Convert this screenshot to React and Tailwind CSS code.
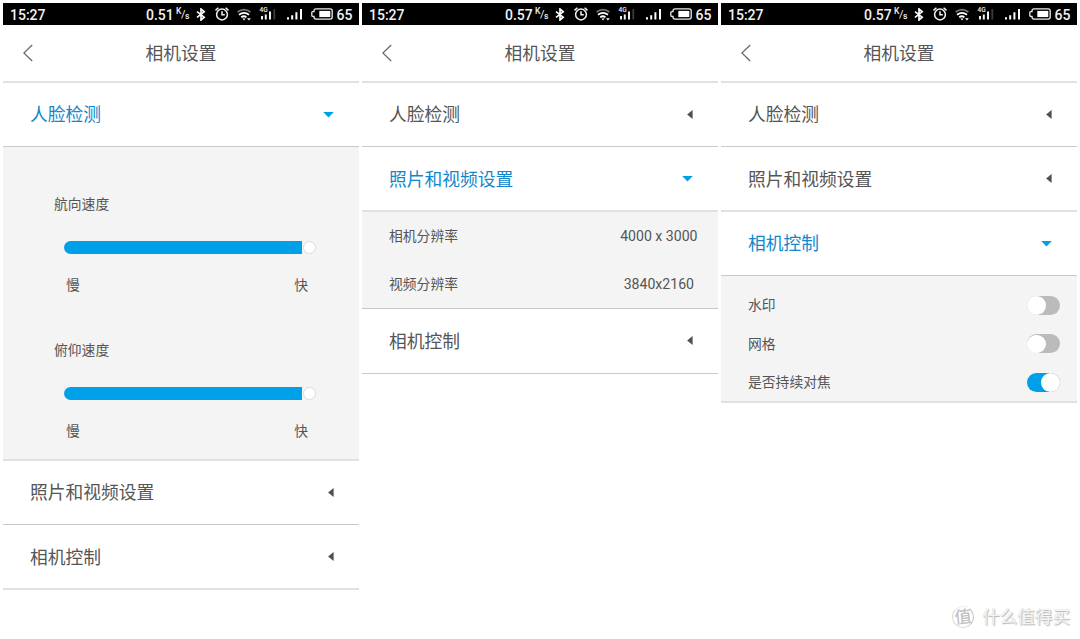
import React from "react";

const BORDER = {
  thin: "border-b border-[#c9c9c9]",
  soft: "border-b-2 border-[#e1e1e1]",
};

function BluetoothIcon() {
  return (
    <svg className="h-[13px] w-[10px] shrink-0" viewBox="0 0 10 13" fill="none" stroke="#fff" strokeWidth="1.7">
      <path d="M1 3.6 8.2 9.2 5 12V1L8.2 3.8 1 9.4" />
    </svg>
  );
}

function AlarmIcon() {
  return (
    <svg className="ml-[9px] h-[14px] w-[14px] shrink-0" viewBox="0 0 14 14" fill="none" stroke="#f4f4f4" strokeWidth="1.5">
      <circle cx="7" cy="7.5" r="5.4" />
      <path d="M7 4.2v3.6h2.8M.5 3.4 3.4.8M13.5 3.4 10.6.8" />
    </svg>
  );
}

function WifiIcon() {
  return (
    <svg className="ml-[8px] h-[13px] w-[15px] shrink-0" viewBox="0 0 15 13" fill="none" strokeWidth="1.7">
      <path d="M.6 4Q7-.9 13.4 4" stroke="#777" />
      <path d="M2 6.8Q7 3 12 6.8M4.2 9.3Q7 7.2 9.4 9.3" stroke="#fff" />
      <path d="M5.4 10.6h3.2L7 12.6z" fill="#fff" />
      <path d="M10 10.2h3.8l-1.9 2.4z" fill="#fff" />
    </svg>
  );
}

function MobileSignalIcon() {
  return (
    <div className="relative ml-[8px] h-[12px] w-[16px] shrink-0">
      <svg className="h-[12px] w-[16px]" viewBox="0 0 16 12" fill="#f2f2f2">
        <path d="M1 8h2v3.5H1zM4.8 6.5h2v5h-2zM9 3.5h2v8H9z" />
        <path d="M13.4 1h1.8v10.5h-1.8z" fill="#3a3a3a" />
      </svg>
      <span className="absolute -top-px left-0 text-[6.5px] leading-[6px] font-medium">4G</span>
    </div>
  );
}

function SignalIcon() {
  return (
    <svg className="ml-[10px] h-[12px] w-[17px] shrink-0" viewBox="0 0 17 12" fill="#fff">
      <path d="M1 9.3h2v2.2H1zM5.2 7.3h2v4.2h-2zM9.4 4.3h2v7.2h-2zM14 1h2v10.5h-2z" />
    </svg>
  );
}

function BatteryIcon() {
  return (
    <svg className="ml-[8px] h-[12px] w-[22px] shrink-0" viewBox="0 0 22 12" fill="none">
      <path d="M5 .9h14.2q2 0 2 2v6.2q0 2-2 2H5Q3 11.1 3 9.1V8.4H1.8Q.8 8.4.8 7.4V4.6q0-1 1-1H3V2.9Q3 .9 5 .9z" stroke="#eee" strokeWidth="1.3" />
      <path d="M8.3 2.9h11v6.2h-11z" fill="#fff" />
    </svg>
  );
}

function StatusBar({ speed }) {
  return (
    <div className="flex h-[22px] items-center bg-black pl-[7px] text-[14px] leading-[22px] font-medium text-[#f2f2f2]">
      <span className="w-[136px] pt-px">15:27</span>
      <span className="w-[30px] pt-px">{speed}</span>
      <span className="flex w-[19.5px] items-center text-[8.5px] leading-none">
        <span className="-mt-[5px]">K</span>
        <span className="-ml-[0.5px] text-[11px] font-normal">/</span>
        <span className="-ml-[0.5px] mt-[4px]">s</span>
      </span>
      <BluetoothIcon />
      <AlarmIcon />
      <WifiIcon />
      <MobileSignalIcon />
      <SignalIcon />
      <BatteryIcon />
      <span className="ml-[4px] pt-px">65</span>
    </div>
  );
}

function Phone({ speed, children }) {
  return (
    <section className="w-[356px] shrink-0">
      <StatusBar speed={speed} />
      <header className="flex h-[58px] items-center border-b-2 border-[#e1e1e1] pl-[20px]">
        <svg className="h-[18px] w-[11px]" viewBox="0 0 11 18" fill="none" stroke="#666" strokeWidth="1.2">
          <path d="M9.2 1 .9 9l8.3 8" />
        </svg>
        <h1 className="flex-1 pt-[2px] pr-[31px] text-center text-[17.7px] leading-[26px] font-normal">相机设置</h1>
      </header>
      {children}
    </section>
  );
}

function Row({ title, open, height = "h-[64px]", line = "thin", nudge = "" }) {
  return (
    <div className={`flex items-center justify-between pl-[27px] ${height} ${BORDER[line]}`}>
      <span className={`text-[17.75px] leading-[26px] ${nudge} ${open ? "text-[#1187cc]" : ""}`}>{title}</span>
      {open ? (
        <svg className="mr-[25px] h-[6px] w-[11px]" viewBox="0 0 11 6" fill="#00a0e9">
          <path d="M.2 0h10.6L5.5 5.5z" />
        </svg>
      ) : (
        <svg className="mr-[25px] mb-px h-[9px] w-[6px]" viewBox="0 0 6 9" fill="#505050">
          <path d="M5.6 0v9L.1 4.5z" />
        </svg>
      )}
    </div>
  );
}

function Slider({ label }) {
  return (
    <div className="h-[146px] pr-[43px] pl-[51px]">
      <div className="leading-[20px]">{label}</div>
      <div className="mt-[27px] ml-[10px] flex h-[13px] items-center">
        <div className="h-[13px] w-[238px] rounded-l-full bg-[#00a0e9]" />
        <div className="ml-px h-[13px] w-[13px] rounded-full border border-[#dcdcdc] bg-white" />
      </div>
      <div className="mt-[20px] flex justify-between pr-[8px] pl-[12px] leading-[22px]">
        <span>慢</span>
        <span>快</span>
      </div>
    </div>
  );
}

function Toggle({ label, on }) {
  return (
    <div className="flex h-[38.5px] items-center justify-between pr-[17px] pl-[27px]">
      <span className="leading-[20px]">{label}</span>
      <span className={`flex h-[19px] w-[33px] items-center rounded-full ${on ? "justify-end bg-[#00a0e9] pr-[0.5px]" : "bg-[#bbb]"}`}>
        <span className="h-[18.5px] w-[18.5px] rounded-full bg-white" />
      </span>
    </div>
  );
}

export default function App() {
  return (
    <main className="relative flex h-[639px] w-[1080px] gap-[3px] overflow-hidden bg-white pt-[3px] pl-[3px] font-[Roboto,'Noto_Sans_CJK_SC',sans-serif] text-[13.8px] text-[#555]">
      <Phone speed="0.51">
        <Row title="人脸检测" open />
        <div className="h-[314px] border-b-2 border-[#e1e1e1] bg-[#f4f4f4] pt-[47px]">
          <Slider label="航向速度" />
          <Slider label="俯仰速度" />
        </div>
        <Row title="照片和视频设置" />
        <Row title="相机控制" line="soft" height="h-[65px]" nudge="pt-[2px]" />
      </Phone>

      <Phone speed="0.57">
        <Row title="人脸检测" />
        <Row title="照片和视频设置" open line="soft" height="h-[65px]" nudge="pt-[2px]" />
        <div className="h-[97px] border-b border-[#c9c9c9] bg-[#f4f4f4] pt-px">
          <div className="flex h-[48px] items-center justify-between pr-[20.5px] pl-[27px]">
            <span className="pb-px">相机分辨率</span>
            <span className="text-[14.1px]">4000 x 3000</span>
          </div>
          <div className="flex h-[48px] items-center justify-between pr-[24px] pl-[27px]">
            <span className="pb-px">视频分辨率</span>
            <span className="text-[14.1px]">3840x2160</span>
          </div>
        </div>
        <Row title="相机控制" height="h-[65px]" nudge="pt-[2px]" />
      </Phone>

      <Phone speed="0.57">
        <Row title="人脸检测" />
        <Row title="照片和视频设置" line="soft" height="h-[65px]" nudge="pt-[2px]" />
        <Row title="相机控制" open />
        <div className="h-[127px] border-b-2 border-[#e1e1e1] bg-[#f4f4f4] pt-[10px]">
          <Toggle label="水印" />
          <Toggle label="网格" />
          <Toggle label="是否持续对焦" on />
        </div>
      </Phone>

      <div className="absolute right-[10px] bottom-[9px] flex items-center gap-[8px] text-[#f4f4f4] [text-shadow:1px_1px_1px_#b5b5b5,0_0_1px_#ccc]">
        <span className="flex h-[22px] w-[22px] -rotate-6 items-center justify-center rounded-full border border-[#d8d8d8] border-t-[#eee] border-r-[#c4c4c4] text-[17px] leading-none font-medium text-[#c2c2c2] [text-shadow:none]">值</span>
        <span className="text-[17.6px] leading-[26px]">什么值得买</span>
      </div>
    </main>
  );
}
